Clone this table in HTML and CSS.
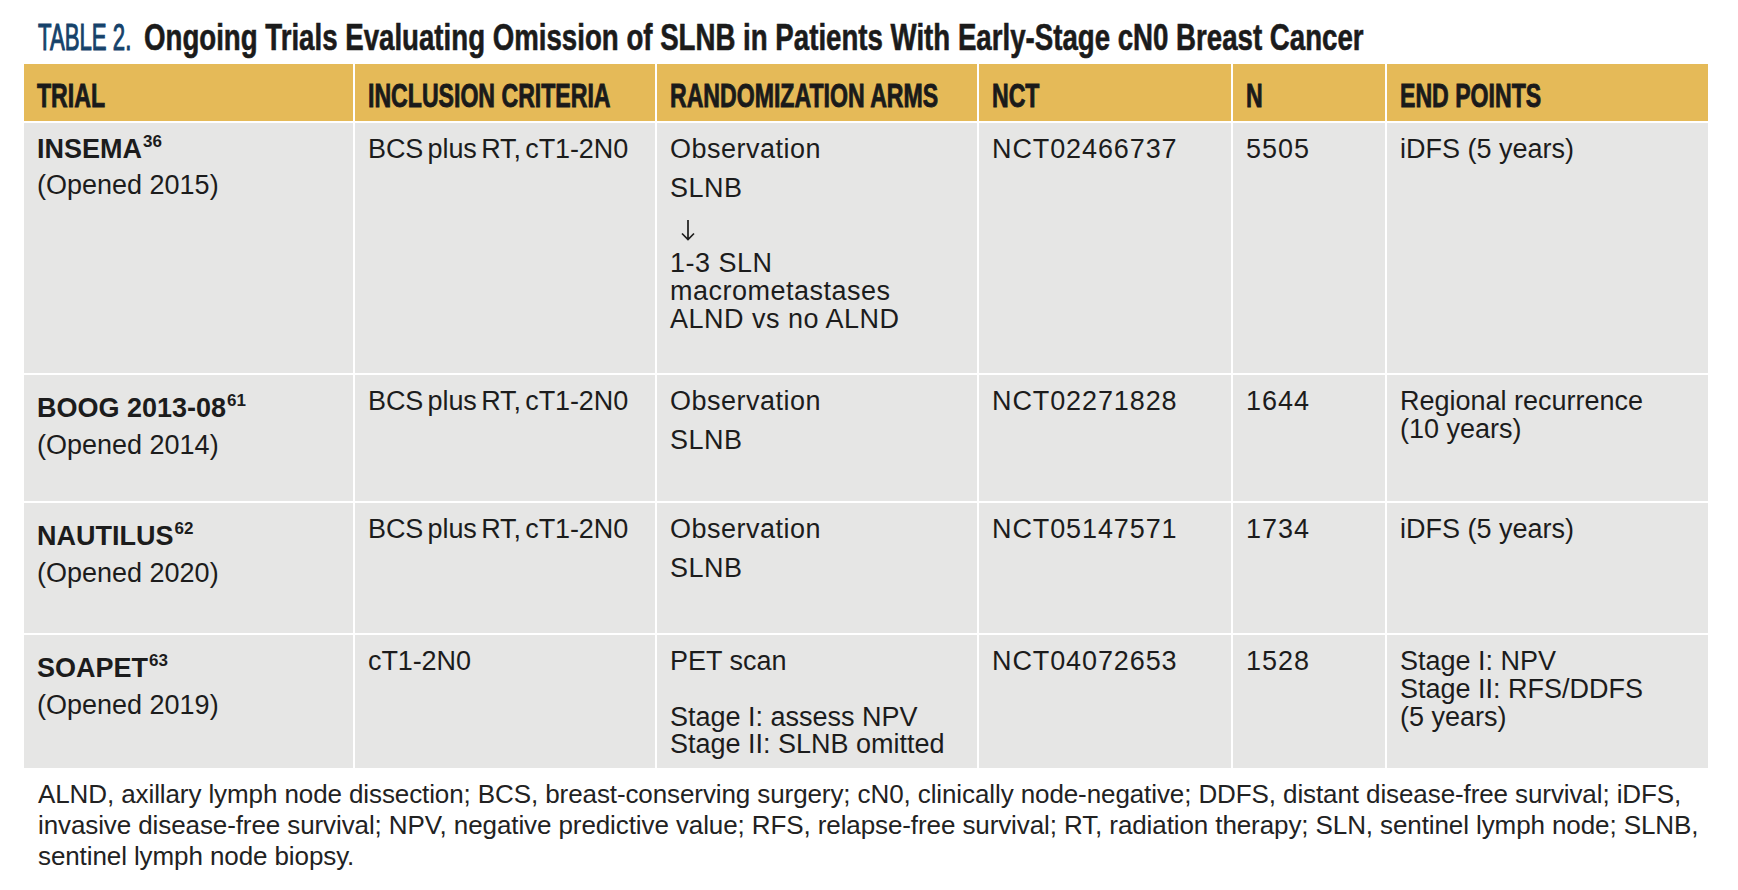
FILE: index.html
```html
<!DOCTYPE html>
<html lang="en">
<head>
<meta charset="utf-8">
<title>Table 2</title>
<link rel="stylesheet" href="styles.css">
</head>
<body>
<div class="page">
  <h1 class="title"><span class="title-label"><span class="sx-label">TABLE 2.</span></span><span class="title-main"><span class="sx-main">Ongoing Trials Evaluating Omission of SLNB in Patients With Early-Stage cN0 Breast Cancer</span></span></h1>

  <div class="table">
    <div class="th"><span class="cond">TRIAL</span></div>
    <div class="th"><span class="cond">INCLUSION CRITERIA</span></div>
    <div class="th"><span class="cond">RANDOMIZATION ARMS</span></div>
    <div class="th"><span class="cond">NCT</span></div>
    <div class="th"><span class="cond">N</span></div>
    <div class="th"><span class="cond">END POINTS</span></div>

    <div class="td trial"><b>INSEMA<sup>36</sup></b><br>(Opened 2015)</div>
    <div class="td incl">BCS plus RT, cT1-2N0</div>
    <div class="td arms wide">
      <div class="arm">Observation</div>
      <div class="arm">SLNB</div>
      <div class="arm arrow"><svg class="arrow-icon" width="16" height="22" viewBox="0 0 16 22" aria-label="↓"><path d="M8 1V20.5M2 14.5L8 20.5L14 14.5" fill="none" stroke="#1c1c1c" stroke-width="1.7"/></svg></div>
      <div class="arm-block">1-3 SLN<br>macrometastases<br>ALND vs no ALND</div>
    </div>
    <div class="td nct">NCT02466737</div>
    <div class="td num">5505</div>
    <div class="td end">iDFS (5 years)</div>

    <div class="td trial shifted"><b>BOOG 2013-08<sup>61</sup></b><br>(Opened 2014)</div>
    <div class="td incl">BCS plus RT, cT1-2N0</div>
    <div class="td arms wide">
      <div class="arm">Observation</div>
      <div class="arm">SLNB</div>
    </div>
    <div class="td nct">NCT02271828</div>
    <div class="td num">1644</div>
    <div class="td end multi">Regional recurrence<br>(10 years)</div>

    <div class="td trial shifted"><b>NAUTILUS<sup>62</sup></b><br>(Opened 2020)</div>
    <div class="td incl">BCS plus RT, cT1-2N0</div>
    <div class="td arms wide">
      <div class="arm">Observation</div>
      <div class="arm">SLNB</div>
    </div>
    <div class="td nct">NCT05147571</div>
    <div class="td num">1734</div>
    <div class="td end">iDFS (5 years)</div>

    <div class="td trial shifted"><b>SOAPET<sup>63</sup></b><br>(Opened 2019)</div>
    <div class="td incl">cT1-2N0</div>
    <div class="td arms">
      <div>PET scan</div>
      <div class="stage-block">Stage I: assess NPV<br>Stage II: SLNB omitted</div>
    </div>
    <div class="td nct">NCT04072653</div>
    <div class="td num">1528</div>
    <div class="td end multi">Stage I: NPV<br>Stage II: RFS/DDFS<br>(5 years)</div>
  </div>

  <p class="note">ALND, axillary lymph node dissection; BCS, breast-conserving surgery; cN0, clinically node-negative; DDFS, distant disease-free survival; iDFS,<br>invasive disease-free survival; NPV, negative predictive value; RFS, relapse-free survival; RT, radiation therapy; SLN, sentinel lymph node; SLNB,<br>sentinel lymph node biopsy.</p>
</div>
</body>
</html>
```

FILE: styles.css
```css
html, body {
  margin: 0;
  padding: 0;
  background: #ffffff;
}

.page {
  padding: 18px 0 0 24px;
  font-family: "Liberation Sans", Arial, sans-serif;
  color: #1c1c1c;
}

.title {
  margin: 0 0 6px 0;
  padding-left: 14px;
  height: 40px;
  line-height: 40px;
  font-size: 36px;
  white-space: nowrap;
  display: flex;
}

.title-label {
  width: 106px;
  flex: none;
}

.sx-label {
  display: inline-block;
  font-weight: 400;
  font-size: 37px;
  color: #15426a;
  transform: scaleX(0.6);
  transform-origin: 0 50%;
  -webkit-text-stroke: 1.1px #15426a;
}

.sx-main {
  display: inline-block;
  font-weight: 700;
  color: #1b1b1b;
  transform: scaleX(0.768);
  transform-origin: 0 50%;
  -webkit-text-stroke: 0.6px #1b1b1b;
}

.table {
  display: grid;
  width: 1684px;
  grid-template-columns: 329px 300px 320px 252px 152px 321px;
  grid-template-rows: 57px 250px 126px 130px 133px;
  gap: 2px;
  background: #ffffff;
}

.th {
  background: #e5ba58;
  padding: 7px 13px 0;
  line-height: 50px;
  font-size: 33px;
  font-weight: 700;
  color: #1a1a1a;
  white-space: nowrap;
}

.cond {
  display: inline-block;
  transform: scaleX(0.70);
  transform-origin: 0 50%;
  -webkit-text-stroke: 0.9px #1a1a1a;
}

.td {
  background: #e6e6e5;
  padding: 8px 13px 0;
  font-size: 27px;
  line-height: 36px;
  color: #1c1c1c;
}

.trial b {
  font-weight: 700;
}

.trial sup {
  font-size: 17px;
  line-height: 0;
  vertical-align: 11px;
  font-weight: 700;
  margin-left: 1px;
}

.trial.shifted {
  padding-top: 15px;
  line-height: 37px;
}

.incl {
  word-spacing: -3px;
  letter-spacing: -0.1px;
}

.wide {
  letter-spacing: 0.5px;
}

.arm {
  margin-bottom: 3px;
}

.arrow {
  height: 36px;
  padding-left: 10px;
}

.arrow-icon {
  display: block;
  padding-top: 10px;
}

.arm-block {
  margin-top: 4px;
  line-height: 28px;
}

.stage-block {
  margin-top: 25px;
  line-height: 27px;
}

.nct {
  letter-spacing: 0.9px;
}

.num {
  letter-spacing: 1px;
}

.end.multi {
  padding-top: 12px;
  line-height: 28px;
}

.note {
  margin: 11px 0 0;
  padding-left: 14px;
  font-size: 26px;
  letter-spacing: -0.1px;
  line-height: 31px;
  color: #222222;
}
```
